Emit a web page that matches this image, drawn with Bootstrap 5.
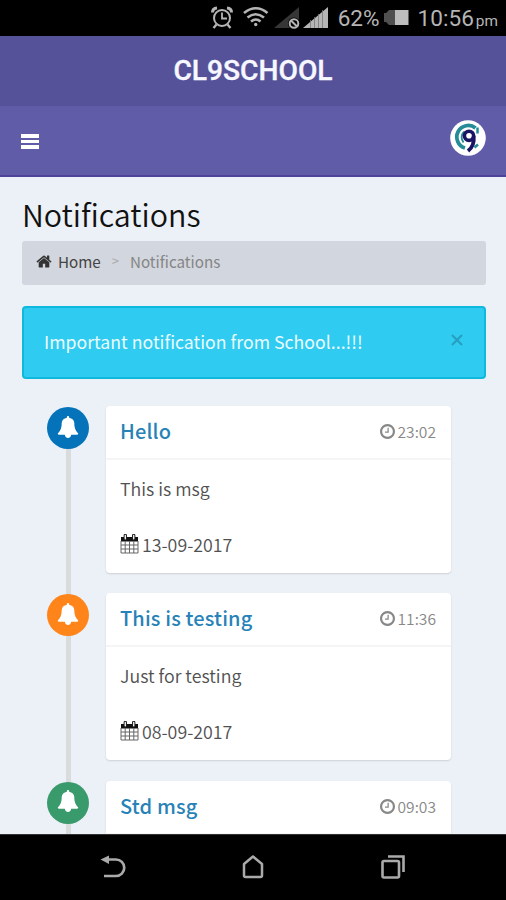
<!DOCTYPE html>
<html lang="en">
<head>
<meta charset="utf-8">
<meta name="viewport" content="width=device-width, initial-scale=1">
<title>CL9SCHOOL</title>
<link href="https://cdn.jsdelivr.net/npm/bootstrap@5.3.0/dist/css/bootstrap.min.css" rel="stylesheet">
<style>
body{height:900px;overflow:hidden;background:#ecf0f7;font-family:"Noto Sans CJK SC","Noto Sans",sans-serif;color:#444;font-size:17px}
svg{display:block;flex:none}
.status-bar{height:36px;background:#000;color:#b5b5b5;font-family:Roboto,sans-serif;font-size:22.6px;line-height:37px;padding-right:8px}
.status-bar .ampm{font-size:15.4px;padding-top:3px;margin-left:2px}
.brand-bar{height:70px;background:#555299;color:#f7f8ff;font:500 28.2px/70px Roboto,sans-serif}
.brand-bar span{-webkit-text-stroke:.35px #f7f8ff}
.tool-bar{height:71px;background:#605ca8;border-bottom:2px solid #4d439b;padding:0 20px 0 21px}
.burger{padding-top:2px}
.burger i{display:block;width:18px;height:3.500px;background:#fff;margin-bottom:2px}
.page{height:657px;padding:17px 20px 0 22px}
.page h1{font-size:30.4px;font-weight:350;line-height:40px;height:40px;margin:0 0 7px;color:#111}
.crumbs{height:44px;background:#d2d6de;border-radius:3px;padding-left:14px;font-size:15.2px;line-height:38px;margin-bottom:21px;padding-bottom:4px}
.notice{height:73px;background:#30cbf0;border:2px solid #0fb9dd;border-radius:4px;color:#e9fbff;font-size:17.7px;font-weight:400;padding:0 20px 2px;margin-bottom:27px}
.timeline{position:relative}
.timeline::before{content:"";position:absolute;left:43.5px;top:6px;bottom:-20px;width:5px;background:#dadbdd}
.entry{height:167px;margin:0 35px 20.3px 25px;gap:17px}
.bell{position:relative;width:42px;height:42px;border-radius:50%;margin-top:1px}
.bell svg{margin-bottom:3px}
.blue{background:#0573b9}.orange{background:#ff851b}.green{background:#399a6c}
.msg{background:#fff;border-radius:4px;box-shadow:0 1px 2px rgba(0,0,0,.13);height:167px}
.msg-head{height:54px;border-bottom:2px solid #f5f5f5;padding:0 15px 0 14px;line-height:49px}
.msg-head b{font-size:20px;font-weight:500;color:#2782b8;letter-spacing:.15px}
.msg-head span{font-size:15.6px;color:#888;font-weight:350;gap:3px;height:51px;line-height:47px}
.msg-body{padding:0 14px;line-height:56px;font-weight:350;font-size:17.8px;color:#505050}
.msg-date{gap:3px}
.system-nav{position:relative;height:66px;background:#000;border-top:1px solid #333;padding:0 100px 2px 99px}
</style>
</head>
<body>
<svg width="0" height="0" class="position-absolute">
<defs>
<symbol id="bell" viewBox="0 0 1792 1792"><path fill="#fff" d="M1728 1408q0 52-38 90t-90 38h-448q0 106-75 181t-181 75-181-75-75-181h-448q-52 0-90-38t-38-90q50-42 91-88t85-119.500 74.500-158.500 50-206 19.500-260q0-152 117-282.500t307-158.500q-8-19-8-39 0-40 28-68t68-28 68 28 28 68q0 20-8 39 190 28 307 158.500t117 282.500q0 139 19.500 260t50 206 74.500 158.500 85 119.500 91 88z"/></symbol>
<symbol id="clock" viewBox="128 128 1536 1536"><path fill="#888" d="M1024 544v448q0 14-9 23t-23 9h-320q-14 0-23-9t-9-23v-64q0-14 9-23t23-9h224v-352q0-14 9-23t23-9h64q14 0 23 9t9 23zm416 352q0-148-73-273t-198-198-273-73-273 73-198 198-73 273 73 273 198 198 273 73 273-73 198-198 73-273zm224 0q0 209-103 385.500t-279.500 279.500-385.500 103-385.500-103-279.500-279.500-103-385.500 103-385.500 279.500-279.500 385.500-103 385.500 103 279.500 279.500 103 385.500z"/></symbol>
<symbol id="calendar" viewBox="0 0 19 20"><path d="M1 3h17v4.500H1z" fill="#111"/><path d="M1 7v12h17V7M5.200 7v12M9.500 7v12M13.800 7v12M1 11h17M1 15h17" fill="none" stroke="#666" stroke-width="1"/><path d="M5.300 1.500v3.300M13.700 1.500v3.300" stroke="#222" stroke-width="3.400" stroke-linecap="round"/><path d="M5.300 1.500v3.300M13.700 1.500v3.300" stroke="#eee" stroke-width="1.400" stroke-linecap="round"/></symbol>
</defs>
</svg>

<div class="status-bar d-flex justify-content-end">
  <svg width="136" height="36" viewBox="205 0 136 36" fill="none" stroke="#b5b5b5">
    <circle cx="222" cy="18" r="8" stroke-width="2"/><path d="M222 12.500v6h5" stroke-width="1.800"/><path d="M212.500 12.500q0-4 4.500-4.500M227 8q4.500.5 4.500 4.500" stroke-width="3"/><path d="M216.500 24.500l-3 3.500M227.500 24.500l3 3.500" stroke-width="2.400"/>
    <path d="M244 13q12-9.500 23.500 0M247.500 17.500q8-6.500 16.500 0M251 21.500q5-4 9.500 0" stroke-width="2.600"/><circle cx="255.700" cy="24.500" r="1.700" fill="#b5b5b5" stroke="none"/>
    <path d="M274 28h25V7z" fill="#363636" stroke="none"/><circle cx="294" cy="23.500" r="6" fill="#000" stroke="none"/><circle cx="294" cy="23.500" r="4.300" stroke-width="2"/><path d="M291 20.500l6 6" stroke-width="2"/>
    <path d="M303 28h25V7z" fill="#b5b5b5" stroke="none"/><path d="M310.500 20v8M314.500 17v11M318.500 14v14M322.500 10v18" stroke="#777" stroke-width=".8"/>
  </svg>
  <span style="margin-left:-3px">62%</span>
  <svg class="ms-1" width="26" height="36" viewBox="384 0 26 36"><path d="M389 10h7v15h-7l-3-3h-2v-9h2z" fill="#505050"/><path d="M395 10h13.500v15H395z" fill="#bdbdbd"/></svg>
  <span class="ms-2">10:56</span><span class="ampm">pm</span>
</div>

<header>
  <div class="brand-bar text-center"><span>CL9SCHOOL</span></div>
  <div class="tool-bar d-flex justify-content-between align-items-center">
    <div class="burger"><i></i><i></i><i class="mb-0"></i></div>
    <svg style="margin-bottom:6px" width="36" height="36" viewBox="0 0 36 36" fill="none"><circle cx="18" cy="18" r="17.800" fill="#fff"/><path d="M25.500 8A11.500 11.500 0 1 0 15 28" stroke="#258b96" stroke-width="3.800"/><path d="M14 11.500q-4.500 5-.5 11" stroke="#258b96" stroke-width="1.800"/><path d="M27.500 7.500v6M28 24.500l-3.500 3" stroke="#258b96" stroke-width="2.500"/><circle cx="19" cy="15.800" r="4.600" stroke="#1b1464" stroke-width="3.600"/><path d="M23.700 16q1 10-5.700 15" stroke="#1b1464" stroke-width="3.800"/></svg>
  </div>
</header>

<main class="page overflow-hidden">
  <h1>Notifications</h1>
  <nav class="crumbs d-flex align-items-center">
    <svg width="16" height="17" viewBox="30 128 1732 1536"><path fill="#333" d="M1472 992v480q0 26-19 45t-45 19h-384v-384h-256v384h-384q-26 0-45-19t-19-45v-480q0-1 .5-3t.5-3l575-474 575 474q1 2 1 6zm223-69l-62 74q-8 9-21 11h-3q-13 0-21-7l-692-577-692 577q-12 8-24 7-13-2-21-11l-62-74q-8-10-7-23.500t11-21.500l719-599q32-26 76-26t76 26l244 204v-195q0-14 9-23t23-9h192q14 0 23 9t9 23v408l219 182q10 8 11 21.500t-7 23.500z"/></svg>
    <span style="margin-left:6px">Home</span><span style="margin:0 11px;color:#aaa;font-size:13px">&gt;</span><span style="color:#858585">Notifications</span>
  </nav>
  <div class="notice d-flex justify-content-between align-items-center" role="alert">
    <span>Important notification from School...!!!</span>
    <svg class="mb-1" width="14" height="14" viewBox="0 0 14 14"><path d="M2 2l10 10M12 2L2 12" stroke="#269fbe" stroke-width="2"/></svg>
  </div>
  <div class="timeline">
    <div class="entry d-flex">
      <div class="bell blue d-flex align-items-center justify-content-center"><svg width="22" height="22"><use href="#bell"/></svg></div>
      <article class="msg flex-grow-1">
        <div class="msg-head d-flex justify-content-between"><b>Hello</b><span class="d-flex align-items-center"><svg width="15" height="15"><use href="#clock"/></svg>23:02</span></div>
        <div class="msg-body"><div>This is msg</div><div class="msg-date d-flex align-items-center"><svg width="19" height="20"><use href="#calendar"/></svg>13-09-2017</div></div>
      </article>
    </div>
    <div class="entry d-flex">
      <div class="bell orange d-flex align-items-center justify-content-center"><svg width="22" height="22"><use href="#bell"/></svg></div>
      <article class="msg flex-grow-1">
        <div class="msg-head d-flex justify-content-between"><b>This is testing</b><span class="d-flex align-items-center"><svg width="15" height="15"><use href="#clock"/></svg>11:36</span></div>
        <div class="msg-body"><div>Just for testing</div><div class="msg-date d-flex align-items-center"><svg width="19" height="20"><use href="#calendar"/></svg>08-09-2017</div></div>
      </article>
    </div>
    <div class="entry d-flex">
      <div class="bell green d-flex align-items-center justify-content-center"><svg width="22" height="22"><use href="#bell"/></svg></div>
      <article class="msg flex-grow-1">
        <div class="msg-head d-flex justify-content-between"><b>Std msg</b><span class="d-flex align-items-center"><svg width="15" height="15"><use href="#clock"/></svg>09:03</span></div>
      </article>
    </div>
  </div>
</main>

<footer class="system-nav d-flex justify-content-between align-items-center">
  <svg width="28" height="26" viewBox="0 0 28 26"><path d="M7 5.500h10a8 8 0 0 1 0 16.500H5" fill="none" stroke="#aaa" stroke-width="2.700"/><path d="M1.500 5.500L10 1.500V10z" fill="#aaa"/></svg>
  <svg width="24" height="26" viewBox="1 0 24 26"><path d="M3 10l9-7.500 9 7.500v11.500q0 1.500-1.500 1.500h-15Q3 23 3 21.500z" fill="none" stroke="#aaa" stroke-width="2.500" stroke-linejoin="round"/></svg>
  <svg width="26" height="26" viewBox="0 0 26 26" fill="none" stroke="#aaa" stroke-width="2.600"><rect x="2.500" y="7" width="16.500" height="16.500" rx="1.500"/><path d="M8 2.500h15.500V18"/></svg>
</footer>
<script src="https://cdn.jsdelivr.net/npm/bootstrap@5.3.0/dist/js/bootstrap.bundle.min.js"></script>
</body>
</html>
